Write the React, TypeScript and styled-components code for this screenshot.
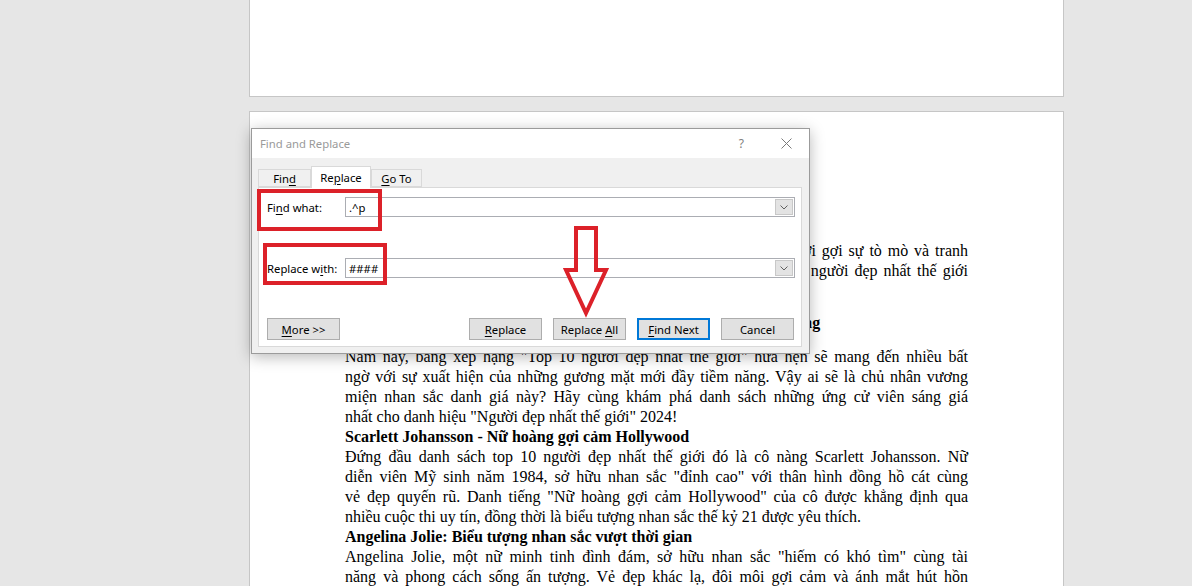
import styled, { createGlobalStyle } from "styled-components";

const GlobalStyle = createGlobalStyle`
  html, body {
    margin: 0;
    padding: 0;
    height: 586px;
    overflow: hidden;
    background: #e6e6e6;
  }
`;

const Workspace = styled.div`
  position: relative;
  height: 586px;
  box-sizing: border-box;
  padding-left: 249px;
  display: flex;
  flex-direction: column;
  gap: 14px;
  overflow: hidden;
  background: #e6e6e6;
`;

const Page = styled.div<{ $prev?: boolean }>`
  width: 815px;
  box-sizing: border-box;
  background: #fff;
  border: 1px solid #c6c6c6;
  ${(p) =>
    p.$prev
      ? `height: 97px; border-top: none; flex: 0 0 auto;`
      : `flex: 1 0 auto; padding: 129px 95px 0;`}
`;

const Doc = styled.div`
  font-family: "Liberation Serif", "Times New Roman", serif;
  font-size: 16px;
  line-height: 20px;
  color: #000;
`;

const Para = styled.div<{ $gap?: number }>`
  margin-top: ${(p) => p.$gap ?? 0}px;
`;

const Line = styled.div<{ $last?: boolean; $bold?: boolean }>`
  text-align: justify;
  text-align-last: ${(p) => (p.$last ? "left" : "justify")};
  font-weight: ${(p) => (p.$bold ? 700 : 400)};
`;

/* dialog */

const Dialog = styled.div`
  position: absolute;
  left: 251px;
  top: 128px;
  width: 559px;
  height: 226px;
  box-sizing: border-box;
  display: flex;
  flex-direction: column;
  background: #f0f0f0;
  border: 1px solid #9b9b9b;
  box-shadow: 0 3px 14px rgba(0, 0, 0, 0.28);
  font-family: "Noto Sans", "Open Sans", sans-serif;
  font-size: 11.3px;
  color: #000;
`;

const TitleBar = styled.div`
  height: 29px;
  flex: 0 0 auto;
  display: flex;
  align-items: center;
  padding: 0 17px 0 8px;
  background: #fff;
`;

const Title = styled.span`
  color: #9a9a9a;
  font-size: 11.3px;
`;

const TitleControls = styled.div`
  margin-left: auto;
  display: flex;
  align-items: center;
  gap: 37px;
  color: #808080;
`;

const Help = styled.span`
  font-size: 12px;
  line-height: 1;
`;

const TabRow = styled.div`
  height: 29px;
  flex: 0 0 auto;
  display: flex;
  align-items: flex-end;
  padding-left: 6px;
`;

const Tab = styled.div<{ $active?: boolean; $w: number }>`
  position: relative;
  z-index: 1;
  width: ${(p) => p.$w}px;
  height: ${(p) => (p.$active ? 22 : 18)}px;
  margin-bottom: ${(p) => (p.$active ? -1 : 0)}px;
  box-sizing: border-box;
  display: flex;
  align-items: center;
  justify-content: center;
  border: 1px solid #d9d9d9;
  border-bottom: ${(p) => (p.$active ? "none" : "1px solid #d9d9d9")};
  background: ${(p) => (p.$active ? "#fff" : "#f0f0f0")};
`;

const Key = styled.span`
  text-decoration: underline;
  text-underline-offset: 2px;
`;

const Panel = styled.div`
  height: 160px;
  flex: 0 0 auto;
  box-sizing: border-box;
  margin: 0 7px 0 6px;
  padding: 9px 6px 6px 8px;
  display: flex;
  flex-direction: column;
  background: #fff;
  border: 1px solid #d9d9d9;
`;

const FieldRow = styled.div<{ $gap?: number }>`
  display: flex;
  align-items: center;
  height: 20px;
  margin-top: ${(p) => p.$gap ?? 0}px;
`;

const Label = styled.div`
  width: 78px;
  flex: 0 0 auto;
`;

const Combo = styled.div`
  flex: 1;
  height: 20px;
  box-sizing: border-box;
  display: flex;
  align-items: stretch;
  border: 1px solid #abadb3;
  background: #fff;
`;

const ComboValue = styled.div`
  flex: 1;
  display: flex;
  align-items: center;
  padding-left: 3px;
  font-size: 11.3px;
`;

const DropBtn = styled.div`
  width: 16px;
  margin: 1px;
  display: flex;
  align-items: center;
  justify-content: center;
  background: #e3e3e3;
  border: 1px solid #c8c8c8;
`;

const ButtonRow = styled.div`
  margin-top: auto;
  padding-right: 1px;
  display: flex;
  justify-content: space-between;
`;

const ButtonGroup = styled.div`
  display: flex;
  gap: 11px;
`;

const Button = styled.div<{ $primary?: boolean }>`
  width: 73px;
  height: 22px;
  box-sizing: border-box;
  display: flex;
  align-items: center;
  justify-content: center;
  background: #e1e1e1;
  border: ${(p) => (p.$primary ? "2px solid #0078d7" : "1px solid #adadad")};
`;

/* red annotations drawn over the dialog */

const Mark = styled.div<{ $x: number; $y: number; $w: number; $h: number }>`
  position: absolute;
  left: ${(p) => p.$x}px;
  top: ${(p) => p.$y}px;
  width: ${(p) => p.$w}px;
  height: ${(p) => p.$h}px;
  box-sizing: border-box;
  border: 4px solid #dc2129;
  z-index: 3;
`;

const ArrowSvg = styled.svg`
  position: absolute;
  left: 308px;
  top: 95px;
  z-index: 3;
`;

const Chevron = () => (
  <svg width="8" height="5" viewBox="0 0 8 5">
    <polyline points="0.5,0.5 4,4 7.5,0.5" fill="none" stroke="#606060" strokeWidth="1" />
  </svg>
);

function App() {
  return (
    <>
      <GlobalStyle />
      <Workspace>
        <Page $prev />
        <Page>
          <Doc>
            <Para>
              <Line>
                Bảng xếp hạng người đẹp thế giới hằng năm luôn là đề tài nóng, khơi gợi sự tò mò và tranh
              </Line>
              <Line>
                luận sôi nổi trên mạng xã hội. Hãy cùng điểm qua danh sách top 10 người đẹp nhất thế giới
              </Line>
              <Line $last>năm 2024 ngay sau đây.</Line>
            </Para>
            <Para $gap={12}>
              <Line $last $bold>
                Bảng xếp hạng top 10 người đẹp nhất thế giới năm 2024 đầy ấn tượng
              </Line>
            </Para>
            <Para $gap={14}>
              <Line>
                Năm nay, bảng xếp hạng "Top 10 người đẹp nhất thế giới" hứa hẹn sẽ mang đến nhiều bất
              </Line>
              <Line>
                ngờ với sự xuất hiện của những gương mặt mới đầy tiềm năng. Vậy ai sẽ là chủ nhân vương
              </Line>
              <Line>
                miện nhan sắc danh giá này? Hãy cùng khám phá danh sách những ứng cử viên sáng giá
              </Line>
              <Line $last>nhất cho danh hiệu "Người đẹp nhất thế giới" 2024!</Line>
              <Line $last $bold>
                Scarlett Johansson - Nữ hoàng gợi cảm Hollywood
              </Line>
              <Line>
                Đứng đầu danh sách top 10 người đẹp nhất thế giới đó là cô nàng Scarlett Johansson. Nữ
              </Line>
              <Line>
                diễn viên Mỹ sinh năm 1984, sở hữu nhan sắc "đỉnh cao" với thân hình đồng hồ cát cùng
              </Line>
              <Line>
                vẻ đẹp quyến rũ. Danh tiếng "Nữ hoàng gợi cảm Hollywood" của cô được khẳng định qua
              </Line>
              <Line $last>
                nhiều cuộc thi uy tín, đồng thời là biểu tượng nhan sắc thế kỷ 21 được yêu thích.
              </Line>
              <Line $last $bold>
                Angelina Jolie: Biểu tượng nhan sắc vượt thời gian
              </Line>
              <Line>
                Angelina Jolie, một nữ minh tinh đình đám, sở hữu nhan sắc "hiếm có khó tìm" cùng tài
              </Line>
              <Line>
                năng và phong cách sống ấn tượng. Vẻ đẹp khác lạ, đôi môi gợi cảm và ánh mắt hút hồn
              </Line>
            </Para>
          </Doc>
        </Page>

        <Dialog>
          <TitleBar>
            <Title>Find and Replace</Title>
            <TitleControls>
              <Help>?</Help>
              <svg width="11" height="11" viewBox="0 0 11 11">
                <path d="M0.5 0.5 L10.5 10.5 M10.5 0.5 L0.5 10.5" stroke="#7a7a7a" strokeWidth="1" />
              </svg>
            </TitleControls>
          </TitleBar>

          <TabRow>
            <Tab $w={53}>
              <span>
                Fin<Key>d</Key>
              </span>
            </Tab>
            <Tab $w={60} $active>
              <span>
                Re<Key>p</Key>lace
              </span>
            </Tab>
            <Tab $w={51}>
              <span>
                <Key>G</Key>o To
              </span>
            </Tab>
          </TabRow>

          <Panel>
            <FieldRow>
              <Label>
                Fi<Key>n</Key>d what:
              </Label>
              <Combo>
                <ComboValue>.^p</ComboValue>
                <DropBtn>
                  <Chevron />
                </DropBtn>
              </Combo>
            </FieldRow>

            <FieldRow $gap={41}>
              <Label>
                Replace w<Key>i</Key>th:
              </Label>
              <Combo>
                <ComboValue>####</ComboValue>
                <DropBtn>
                  <Chevron />
                </DropBtn>
              </Combo>
            </FieldRow>

            <ButtonRow>
              <Button>
                <span>
                  <Key>M</Key>ore &gt;&gt;
                </span>
              </Button>
              <ButtonGroup>
                <Button>
                  <span>
                    <Key>R</Key>eplace
                  </span>
                </Button>
                <Button>
                  <span>
                    Replace <Key>A</Key>ll
                  </span>
                </Button>
                <Button $primary>
                  <span>
                    <Key>F</Key>ind Next
                  </span>
                </Button>
                <Button>Cancel</Button>
              </ButtonGroup>
            </ButtonRow>
          </Panel>

          <Mark $x={5} $y={60} $w={125} $h={42} />
          <Mark $x={11} $y={114} $w={124} $h={42} />
          <ArrowSvg width="52" height="94" viewBox="0 0 52 94">
            <polygon
              points="16,4 36,4 36,46 46,46 26,89 6,46 16,46"
              fill="none"
              stroke="#dc2129"
              strokeWidth="4"
              strokeLinejoin="miter"
            />
          </ArrowSvg>
        </Dialog>
      </Workspace>
    </>
  );
}

export default App;
